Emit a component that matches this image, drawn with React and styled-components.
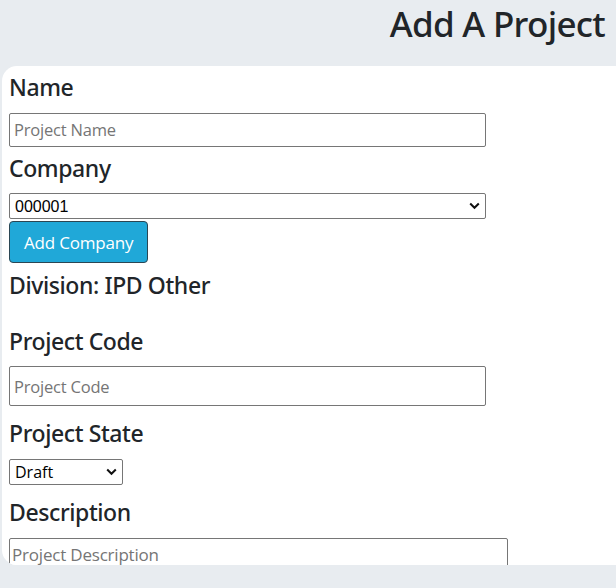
import styled, { createGlobalStyle } from 'styled-components'

const Global = createGlobalStyle`
    html, body {
        margin: 0;
        background: #e8ecf0;
        font-family: "Noto Sans", "Open Sans", sans-serif;
        color: #212529;
    }
`

const Header = styled.div`
    height: 66px;
    box-sizing: border-box;
    padding: 3px 11px 0 0;
    text-align: right;
`

const Title = styled.h1`
    margin: 0;
    font-size: 35px;
    line-height: 42px;
    font-weight: 500;
    letter-spacing: -0.7px;
`

const Card = styled.div`
    margin-left: 2px;
    height: 499px;
    box-sizing: border-box;
    padding: 0 7px;
    background: #fff;
    border-radius: 15px 0 0 15px;
    overflow: hidden;
`

const Label = styled.h4`
    margin: ${props => props.$top}px 0 11px;
    font-size: 23px;
    line-height: 27.6px;
    font-weight: 500;
    letter-spacing: -0.4px;
`

const TextInput = styled.input`
    display: block;
    box-sizing: border-box;
    width: 477px;
    height: ${props => props.$h}px;
    margin: 0;
    padding: 0 4px;
    border: 1px solid #767676;
    border-radius: 2px;
    font-family: "Open Sans", sans-serif;
    font-size: 16.5px;
    letter-spacing: -0.2px;
    color: #212529;
    &::placeholder { color: #757575; }
`

const SelectWrap = styled.div`
    position: relative;
    width: ${props => props.$w}px;
`

const Select = styled.select`
    display: block;
    box-sizing: border-box;
    width: 100%;
    height: 26px;
    margin: 0;
    padding: 0 5px;
    border: 1px solid #767676;
    border-radius: 2px;
    background: #fff;
    appearance: none;
    font-family: ${props => props.$mono ? '"Liberation Sans", Arial' : '"Open Sans"'}, sans-serif;
    font-size: 16px;
    color: #000;
`

const Chevron = styled.svg`
    position: absolute;
    right: 6px;
    top: 9px;
    width: 11px;
    height: 8px;
    pointer-events: none;
`

const Button = styled.button`
    display: block;
    box-sizing: border-box;
    height: 42px;
    margin-top: 2px;
    padding: 0 14px;
    background: #20a8d8;
    border: 1px solid #2b4653;
    border-radius: 4px;
    color: #fff;
    font-family: "Open Sans", sans-serif;
    font-size: 17px;
    letter-spacing: -0.2px;
`

const TextArea = styled.textarea`
    display: block;
    box-sizing: border-box;
    width: 499px;
    height: 60px;
    margin: 0;
    padding: 4px 2px;
    border: 1px solid #767676;
    border-radius: 2px;
    resize: none;
    font-family: "Open Sans", sans-serif;
    font-size: 17px;
    letter-spacing: -0.2px;
    &::placeholder { color: #757575; }
`

const Dropdown = ({ w, mono, value }) => (
    <SelectWrap $w={w}>
        <Select $mono={mono} defaultValue={value}>
            <option>{value}</option>
        </Select>
        <Chevron viewBox="0 0 11 8">
            <path d="M1.2 1.5 L5.5 5.8 L9.8 1.5" fill="none" stroke="#111" strokeWidth="2" />
        </Chevron>
    </SelectWrap>
)

export default function App() {
    return (
        <>
            <Global />
            <Header>
                <Title>Add A Project</Title>
            </Header>
            <Card>
                <Label $top={8}>Name</Label>
                <TextInput $h={34} placeholder="Project Name" />
                <Label $top={8}>Company</Label>
                <Dropdown w={477} mono value="000001" />
                <Button>Add Company</Button>
                <Label $top={9}>Division: IPD Other</Label>
                <Label $top={28}>Project Code</Label>
                <TextInput $h={40} placeholder="Project Code" />
                <Label $top={14}>Project State</Label>
                <Dropdown w={114} value="Draft" />
                <Label $top={14}>Description</Label>
                <TextArea placeholder="Project Description" />
            </Card>
        </>
    )
}
